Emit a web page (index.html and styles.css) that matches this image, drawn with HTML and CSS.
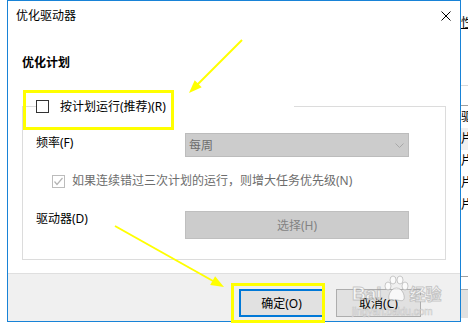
FILE: index.html
```html
<!DOCTYPE html>
<html>
<head>
    <title>优化驱动器</title>
    <link rel="stylesheet" href="styles.css">
</head>
<body>
    <div class="desk">
        <div class="dialog">
            <div class="titlebar">
                <span class="title">优化驱动器</span>
                <svg class="close" width="10" height="10" viewBox="0 0 10 10">
                    <path d="M0.5,0.5 L9.5,9.5 M9.5,0.5 L0.5,9.5" stroke="#000" stroke-width="1" fill="none"/>
                </svg>
            </div>
            <div class="main">
                <h2 class="heading">优化计划</h2>
                <fieldset class="group">
                    <legend class="group-legend">
                        <span class="check"><span class="box"></span>按计划运行(推荐)(R)</span>
                    </legend>
                    <div class="row row-freq">
                        <span class="label">频率(F)</span>
                        <div class="combo">
                            <span>每周</span>
                            <svg class="chev" width="9" height="5" viewBox="0 0 9 5">
                                <polyline points="0.5,0.5 4.5,4.5 8.5,0.5" stroke="#a8a8a8" fill="none"/>
                            </svg>
                        </div>
                    </div>
                    <div class="row row-retry">
                        <span class="box box-off">
                            <svg width="11" height="11" viewBox="0 0 11 11">
                                <polyline points="1.5,5.5 4,8.5 9.5,2" stroke="#b4b4b4" stroke-width="1.2" fill="none"/>
                            </svg>
                        </span>
                        <span class="retry-text">如果连续错过三次计划的运行，则增大任务优先级(N)</span>
                    </div>
                    <div class="row row-drive">
                        <span class="label">驱动器(D)</span>
                        <button class="btn-off">选择(H)</button>
                    </div>
                </fieldset>
            </div>
            <div class="footer">
                <button class="btn btn-default">确定(O)</button>
                <button class="btn">取消(C)</button>
            </div>
        </div>
        <!-- window behind the dialog -->
        <div class="behind">
            <div class="bh-head"><u>性能</u></div>
            <div class="bh-gap"></div>
            <div class="bh-row">驱</div>
            <div class="bh-row bh-sel">片</div>
            <div class="bh-row">片</div>
            <div class="bh-row">片</div>
            <div class="bh-row">片</div>
            <div class="bh-fill"></div>
            <div class="bh-foot"></div>
        </div>
    </div>

    <!-- yellow annotations -->
    <svg class="annot" width="468" height="330" viewBox="0 0 468 330">
        <rect x="24.5" y="91.5" width="148" height="37" fill="none" stroke="#ffff00" stroke-width="3"/>
        <rect x="232.5" y="284.5" width="91" height="37" fill="none" stroke="#ffff00" stroke-width="3"/>
        <line x1="242" y1="40" x2="197" y2="85" stroke="#ffff00" stroke-width="2"/>
        <polygon points="189,93 201.7,87.3 194.7,80.3" fill="#ffff00"/>
        <line x1="115" y1="226" x2="213" y2="281" stroke="#ffff00" stroke-width="2"/>
        <polygon points="224,287 210.2,285 215.1,276.3" fill="#ffff00"/>
    </svg>

    <div class="watermark">
        <div class="wm-top">
            <span class="wm-bai">Bai</span>
            <svg class="wm-paw" width="26" height="28" viewBox="0 0 26 28">
                <g fill="rgba(255,255,255,0.75)" stroke="rgba(160,160,160,0.55)" stroke-width="1">
                    <ellipse cx="5" cy="11" rx="3" ry="4"/>
                    <ellipse cx="10" cy="5" rx="3" ry="4"/>
                    <ellipse cx="17" cy="5" rx="3" ry="4"/>
                    <ellipse cx="22" cy="11" rx="3" ry="4"/>
                    <path d="M13.5,13 C8,13 5,20 6,24 C7,27 11,25 13.5,25 C16,25 20,27 21,24 C22,20 19,13 13.5,13 Z"/>
                </g>
            </svg>
            <span class="wm-jy">经验</span>
        </div>
        <div class="wm-url">jingyan.baidu.com</div>
    </div>
</body>
</html>
```

FILE: styles.css
```css
body {
    margin: 0;
    width: 468px;
    height: 330px;
    position: relative;
    overflow: hidden;
    background-color: #ffffff;
    font-family: "Noto Sans", "Noto Sans CJK SC", sans-serif;
    font-size: 12px;
    color: #000000;
}
.desk {
    display: flex;
    height: 330px;
    padding-left: 7px;
}
.dialog {
    width: 454px;
    height: 322px;
    box-sizing: border-box;
    border: 1px solid #1883d7;
    display: flex;
    flex-direction: column;
    background-color: #ffffff;
}
.titlebar {
    height: 30px;
    display: flex;
    align-items: center;
    padding: 0 9px 0 8px;
    flex-shrink: 0;
}
.title {
    line-height: 16px;
}
.close {
    margin-left: auto;
}
.main {
    flex: 1;
    padding: 0 14px;
}
.heading {
    margin: 24px 0 0;
    font-size: 12px;
    font-weight: bold;
    line-height: 16px;
}
.group {
    margin: 27px 0 0;
    padding: 18px 35px 20px 13px;
    border: 1px solid #dcdcdc;
    min-width: 0;
}
.group-legend {
    padding: 0;
    width: 258px;
    line-height: 17px;
}
.check {
    display: flex;
    align-items: center;
    gap: 11px;
}
.box {
    width: 13px;
    height: 13px;
    box-sizing: border-box;
    border: 1px solid #333333;
    background-color: #ffffff;
    flex-shrink: 0;
    display: flex;
    align-items: center;
    justify-content: center;
}
.box-off {
    border-color: #bcbcbc;
}
.row {
    display: flex;
}
.label {
    width: 149px;
    flex-shrink: 0;
}
.row-freq {
    align-items: flex-start;
}
.row-freq .label {
    line-height: 20px;
}
.combo {
    width: 224px;
    height: 24px;
    box-sizing: border-box;
    border: 1px solid #bcbcbc;
    background-color: #cccccc;
    color: #6d6d6d;
    display: flex;
    align-items: center;
    padding: 0 4px 0 3px;
}
.chev {
    margin-left: auto;
}
.row-retry {
    margin-top: 15px;
    padding-left: 16px;
    align-items: center;
    gap: 7px;
    line-height: 18px;
}
.retry-text {
    color: #6d6d6d;
}
.row-drive {
    margin-top: 21px;
    align-items: flex-start;
}
.row-drive .label {
    line-height: 16px;
}
.btn-off {
    width: 224px;
    height: 28px;
    box-sizing: border-box;
    border: 1px solid #bfbfbf;
    background-color: #cccccc;
    color: #838383;
    font-family: inherit;
    font-size: 12px;
    padding: 0;
}
.footer {
    height: 48px;
    box-sizing: border-box;
    flex-shrink: 0;
    border-top: 1px solid #dfdfdf;
    background-color: #f0f0f0;
    display: flex;
    justify-content: flex-end;
    align-items: flex-start;
    gap: 12px;
    padding: 15px 39px 0 0;
}
.btn {
    width: 85px;
    height: 28px;
    box-sizing: border-box;
    border: 1px solid #adadad;
    background-color: #e1e1e1;
    color: #000000;
    font-family: inherit;
    font-size: 12px;
    padding: 0;
}
.btn-default {
    border: 2px solid #0078d7;
}
.behind {
    flex: 1;
    overflow: hidden;
    display: flex;
    flex-direction: column;
    white-space: nowrap;
    line-height: 16px;
}
.bh-head {
    height: 86px;
    box-sizing: border-box;
    padding-top: 15px;
    border-bottom: 1px solid #d9d9d9;
}
.bh-gap {
    height: 20px;
    box-sizing: border-box;
    border-bottom: 1px solid #a0a0a0;
}
.bh-row {
    height: 22px;
    line-height: 22px;
}
.bh-row:first-of-type {
    height: 18px;
}
.bh-sel {
    background-color: #f0f0f0;
}
.bh-fill {
    flex: 1;
    border-bottom: 1px solid #a0a0a0;
}
.bh-foot {
    height: 29px;
    margin: 12px 0 12px;
    box-sizing: border-box;
    border-top: 1px solid #adadad;
    background-color: #e1e1e1;
}
.annot {
    position: absolute;
    top: 0;
    left: 0;
    pointer-events: none;
}
.watermark {
    position: absolute;
    left: 352px;
    top: 274px;
    pointer-events: none;
}
.wm-top {
    display: flex;
    align-items: flex-end;
    height: 30px;
}
.wm-bai, .wm-jy {
    color: rgba(255,255,255,0.75);
    -webkit-text-stroke: 1px rgba(160,160,160,0.55);
    font-weight: bold;
    line-height: 20px;
}
.wm-bai {
    font-size: 19px;
    font-family: "Liberation Sans", sans-serif;
}
.wm-jy {
    font-size: 16px;
}
.wm-paw {
    margin: 0 1px 1px 1px;
}
.wm-url {
    font-size: 10px;
    line-height: 12px;
    color: rgba(255,255,255,0.8);
    -webkit-text-stroke: 0.6px rgba(160,160,160,0.5);
    font-family: "Liberation Sans", sans-serif;
    margin-top: 2px;
}
```
